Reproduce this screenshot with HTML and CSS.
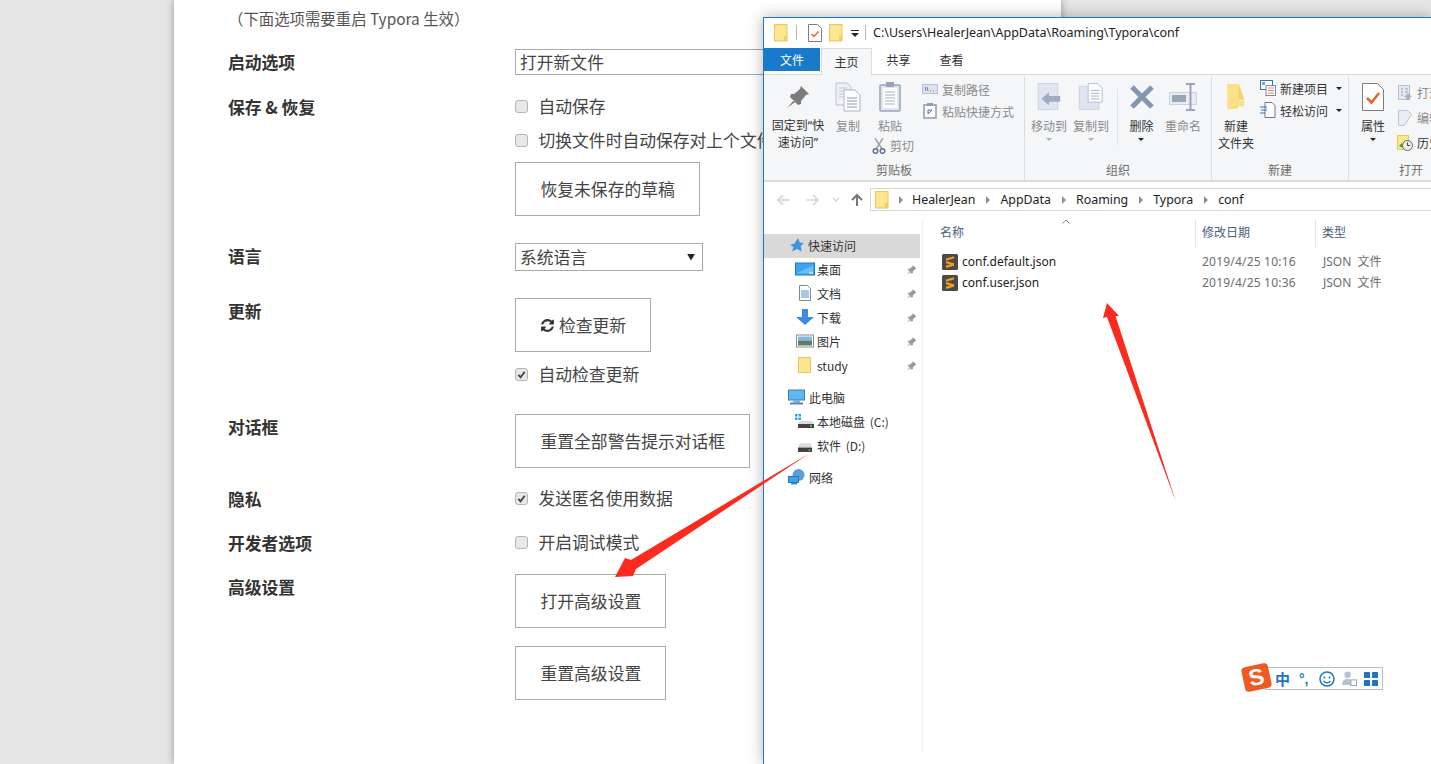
FILE: index.html
```html
<!DOCTYPE html>
<html lang="zh">
<head>
<meta charset="utf-8">
<title>Typora 偏好设置</title>
<link rel="stylesheet" href="styles.css">
</head>
<body>
<svg class="defs" width="0" height="0" aria-hidden="true">
  <symbol id="folder" viewBox="0 0 14 18"><rect x=".5" y=".5" width="12.5" height="16.5" fill="#fde692" stroke="#e9c75c"/><rect x="10" y="12" width="3" height="5" fill="#f3cc62"/></symbol>
  <symbol id="doccheck" viewBox="0 0 14 18"><path d="M.5.5h9l4 4v13H.5z" fill="#fff" stroke="#7d7d7d"/><path d="M3.500 10l2.500 2.500 4.500-5" fill="none" stroke="#e8622a" stroke-width="1.500"/></symbol>
  <symbol id="pin" viewBox="0 0 24 24"><path d="M15 1l8 8-3 1-5 6v3l-3 1-8-8 1-3h3l6-5zM8 15l-7 8 8-6z"/></symbol>
  <symbol id="sublime" viewBox="0 0 16 16"><rect width="16" height="16" rx="1.500" fill="#4a4a4a"/><path d="M4 6.800V4.500l8-2.300v2.300zM4 7l8 2.300v2.300L4 9.300zM4 11.600l8-2.300v2.400l-8 2.300z" fill="#f89a1c"/></symbol>
  <symbol id="drive" viewBox="0 0 16 11"><path d="M2 0h12l2 5H0z" fill="#dcdcdc"/><rect y="5" width="16" height="5" fill="#3e3e3e"/><rect x="12" y="7" width="2" height="1.500" fill="#5ddb5d"/></symbol>
  <symbol id="miniarrow" viewBox="0 0 6 8"><path d="M1 0l4 4-4 4z" fill="#8f8f8f"/></symbol>
</svg>

<main class="panel">
  <div class="row-clipped"><div class="label">编辑器 [?]</div></div>
  <p class="note">（下面选项需要重启 Typora 生效）</p>

  <section class="row gap-18">
    <div class="label">启动选项</div>
    <div class="controls"><div class="select select-wide">打开新文件</div></div>
  </section>

  <section class="row gap-19">
    <div class="label">保存 &amp; 恢复</div>
    <div class="controls">
      <label class="check"><span class="box"></span>自动保存</label>
      <label class="check"><span class="box"></span>切换文件时自动保存对上个文件的修改</label>
      <button class="btn">恢复未保存的草稿</button>
    </div>
  </section>

  <section class="row gap-27">
    <div class="label">语言</div>
    <div class="controls"><div class="select select-lang">系统语言<span class="caret">▼</span></div></div>
  </section>

  <section class="row gap-27">
    <div class="label">更新</div>
    <div class="controls">
      <button class="btn btn-update">
        <svg class="refresh" viewBox="0 0 1792 1792"><path d="M1639 1056q0 5-1 7-64 268-268 434.500t-478 166.500q-146 0-282.500-55t-243.500-157l-129 129q-19 19-45 19t-45-19-19-45v-448q0-26 19-45t45-19h448q26 0 45 19t19 45-19 45l-137 137q71 66 161 102t187 36q134 0 250-65t186-179q11-17 53-117 8-23 30-23h192q13 0 22.500 9.500t9.500 22.500zm25-800v448q0 26-19 45t-45 19h-448q-26 0-45-19t-19-45 19-45l138-138q-148-137-349-137-134 0-250 65t-186 179q-11 17-53 117-8 23-30 23h-199q-13 0-22.500-9.500t-9.500-22.500v-7q65-268 270-434.500t480-166.500q146 0 284 55.500t245 156.500l130-129q19-19 45-19t45 19 19 45z"/></svg>检查更新
      </button>
      <label class="check"><span class="box on"><svg viewBox="0 0 12 12"><path d="M2.500 6.500l2.500 2.500 4.500-6" fill="none" stroke="#444" stroke-width="2"/></svg></span>自动检查更新</label>
    </div>
  </section>

  <section class="row gap-28">
    <div class="label">对话框</div>
    <div class="controls"><button class="btn">重置全部警告提示对话框</button></div>
  </section>

  <section class="row gap-18">
    <div class="label">隐私</div>
    <div class="controls"><label class="check"><span class="box on"><svg viewBox="0 0 12 12"><path d="M2.500 6.500l2.500 2.500 4.500-6" fill="none" stroke="#444" stroke-width="2"/></svg></span>发送匿名使用数据</label></div>
  </section>

  <section class="row gap-20">
    <div class="label">开发者选项</div>
    <div class="controls"><label class="check"><span class="box"></span>开启调试模式</label></div>
  </section>

  <section class="row gap-20">
    <div class="label">高级设置</div>
    <div class="controls controls-loose">
      <button class="btn">打开高级设置</button>
      <button class="btn">重置高级设置</button>
    </div>
  </section>
</main>

<div class="window">
  <header class="titlebar">
    <svg class="qat-icon"><use href="#folder"/></svg>
    <span class="qat-sep"></span>
    <svg class="qat-icon"><use href="#doccheck"/></svg>
    <svg class="qat-icon"><use href="#folder"/></svg>
    <svg class="qat-drop" viewBox="0 0 8 8"><path d="M0 1h8v1H0zM0 4h8L4 8z" fill="#222"/></svg>
    <span class="qat-sep qat-sep-end"></span>
    <span class="title">C:\Users\HealerJean\AppData\Roaming\Typora\conf</span>
  </header>

  <nav class="tabs">
    <div class="tab tab-file">文件</div>
    <div class="tab tab-active">主页</div>
    <div class="tab">共享</div>
    <div class="tab">查看</div>
  </nav>

  <div class="ribbon">
    <section class="group g-clip">
      <div class="group-body">
        <div class="big w56 on">
          <span class="slot"><svg class="i24 pin-grey"><use href="#pin"/></svg></span>
          <span class="latin-first">固定到“快<br>速访问”</span>
        </div>
        <div class="big w44">
          <span class="slot"><svg class="i26" viewBox="0 0 26 30"><path d="M1 1h11l4 4v18H1z" fill="#eef1f6" stroke="#b9c3d2"/><path d="M4 6h8M4 9h4M4 12h4M4 15h4" stroke="#c0c9d6"/><path d="M9 8h11l5 5v16H9z" fill="#fff" stroke="#a9b4c6"/><path d="M12 16h10M12 19h10M12 22h10M12 25h10" stroke="#8c99ad"/></svg></span>
          <span>复制</span>
        </div>
        <div class="big w40">
          <span class="slot"><svg class="i26" viewBox="0 0 22 30"><rect x="1" y="3" width="20" height="26" rx="1" fill="#dfe5ee" stroke="#98a4b8" stroke-width="1.500"/><rect x="4" y="6" width="14" height="20" fill="#fff"/><rect x="7" y="0" width="8" height="5" fill="#98a4b8"/><path d="M6 10h10M6 13h10M6 16h10M6 19h10M6 22h10" stroke="#a5b1c3"/></svg></span>
          <span>粘贴</span>
          <span class="cut"><svg class="i14" viewBox="0 0 14 16"><path d="M3 0l7 11M11 0L4 11" stroke="#9aa4b4" stroke-width="1.500"/><circle cx="3.500" cy="13" r="2.300" fill="none" stroke="#5f7391" stroke-width="1.500"/><circle cx="10.500" cy="13" r="2.300" fill="none" stroke="#5f7391" stroke-width="1.500"/></svg>剪切</span>
        </div>
        <div class="small-col sc-clip">
          <div class="small"><svg class="i16" viewBox="0 0 16 10"><rect x=".5" y=".5" width="15" height="9" fill="#dce3ee" stroke="#b7c1d1"/><path d="M3 3l1 4M5 3l1 4M8 7h1M11 7h1" stroke="#6f819c"/></svg>复制路径</div>
          <div class="small"><svg class="i16" viewBox="0 0 14 16"><rect x="1" y="2" width="12" height="13" fill="#fff" stroke="#8d9bb2" stroke-width="1.500"/><rect x="4" y="0" width="6" height="3" fill="#8d9bb2"/><path d="M5 11V7h4M5 11l4-4" fill="none" stroke="#56709a"/></svg>粘贴快捷方式</div>
        </div>
      </div>
      <div class="group-label label-clip">剪贴板</div>
    </section>

    <section class="group g-org">
      <div class="group-body">
        <div class="big w48">
          <span class="slot"><svg class="i30" viewBox="0 0 24 30"><rect x=".5" y=".5" width="21" height="28" fill="#dfe6f1" stroke="#c9d2e0"/><path d="M4 17l8-7v4h12v6H12v4z" fill="#9fadc2"/></svg></span>
          <span class="drop">移动到</span>
        </div>
        <div class="big w36">
          <span class="slot"><svg class="i30" viewBox="0 0 26 30"><rect x=".5" y="3.500" width="21" height="25" fill="#dfe6f1" stroke="#c9d2e0"/><path d="M10 .5h10l5 5v15H10z" fill="#fff" stroke="#b3bccb"/><path d="M13 8h9M13 11h9M13 14h9M13 17h9" stroke="#a5afc0"/></svg></span>
          <span class="drop">复制到</span>
        </div>
        <span class="group-sep"></span>
        <div class="big w47 on">
          <span class="slot"><svg class="i26" viewBox="0 0 26 26"><path d="M3 3l20 20M23 3L3 23" stroke="#8496b0" stroke-width="5"/></svg></span>
          <span class="drop drop-dark">删除</span>
        </div>
        <div class="big w36">
          <span class="slot"><svg class="i30" viewBox="0 0 28 28"><rect x=".5" y="9.500" width="27" height="12" fill="#e9edf3" stroke="#c9d2e0"/><rect x="3" y="12" width="14" height="7" fill="#98a4b8"/><path d="M17 1h9M17 27h9M21.500 1v26" stroke="#98a4b8" stroke-width="2"/></svg></span>
          <span>重命名</span>
        </div>
      </div>
      <div class="group-label">组织</div>
    </section>

    <section class="group g-new">
      <div class="group-body">
        <div class="big w48 on">
          <span class="slot"><svg class="i30" viewBox="0 0 20 30"><path d="M1 1h12l6 17H13l-1 9-11 1z" fill="#f6d25f"/><path d="M1 1h12v18h6v6H9l-8 3z" fill="#fbe089"/></svg></span>
          <span>新建<br>文件夹</span>
        </div>
        <div class="small-col on">
          <div class="small"><svg class="i16" viewBox="0 0 16 16"><rect x=".5" y=".5" width="12" height="9" fill="#fff" stroke="#2f74b5"/><rect x="2" y="2" width="3" height="3" fill="#7ba7d4"/><rect x="6" y="5.500" width="9.500" height="10" fill="#fff" stroke="#7d8a9e"/><path d="M8 8h6M8 10.500h6M8 13h6" stroke="#e28060"/></svg>新建项目<i class="tri"></i></div>
          <div class="small"><svg class="i16" viewBox="0 0 16 16"><path d="M5 .5h7l3 3v12H5z" fill="#fff" stroke="#6e7786"/><path d="M0 5h7M1 8h6M0 11h5" stroke="#2a75bb" stroke-width="1.200"/></svg>轻松访问<i class="tri"></i></div>
        </div>
      </div>
      <div class="group-label">新建</div>
    </section>

    <section class="group g-open">
      <div class="group-body">
        <div class="big w48 on">
          <span class="slot"><svg class="i30" viewBox="0 0 22 28"><path d="M.5.500h15l6 6v21H.5z" fill="#fff" stroke="#7d7d7d"/><path d="M5 15l4.500 4.500L17 10" fill="none" stroke="#e8622a" stroke-width="2.500"/></svg></span>
          <span class="drop drop-dark">属性</span>
        </div>
        <div class="small-col small-tall">
          <div class="small"><svg class="i16" viewBox="0 0 14 16"><rect x=".5" y=".5" width="11" height="14" fill="#e4e9f1" stroke="#b7c1d1"/><path d="M3 4h2M3 7h2M3 10h2M7 4h3M7 7h3" stroke="#8d9bb2"/><path d="M8 15v-3H6l4-4 4 4h-2v3z" fill="#a8b4c6"/></svg>打开</div>
          <div class="small"><svg class="i16" viewBox="0 0 14 16"><path d="M.5.500h9l4 4-7 11h-6z" fill="#e9eef5" stroke="#bcc6d6"/></svg>编辑</div>
          <div class="small on"><svg class="i16" viewBox="0 0 16 16"><rect x=".5" y=".5" width="11" height="14" fill="#fde692" stroke="#e9c75c"/><circle cx="10.500" cy="10.500" r="5" fill="#eee" stroke="#666"/><path d="M10.500 7.500v3h2.500" fill="none" stroke="#444"/><path d="M2 11l3-3 1 5z" fill="#3a9a3a"/></svg>历史记录</div>
        </div>
      </div>
      <div class="group-label">打开</div>
    </section>
  </div>

  <div class="addressbar">
    <svg class="nav-arrow" viewBox="0 0 14 12"><path d="M13 6H2M7 1L2 6l5 5" fill="none" stroke="#dcdcdc" stroke-width="2"/></svg>
    <svg class="nav-arrow" viewBox="0 0 14 12"><path d="M1 6h11M7 1l5 5-5 5" fill="none" stroke="#dcdcdc" stroke-width="2"/></svg>
    <svg class="nav-down" viewBox="0 0 8 5"><path d="M1 1l3 3 3-3" fill="none" stroke="#d0d0d0" stroke-width="1.200"/></svg>
    <svg class="nav-up" viewBox="0 0 12 13"><path d="M6 13V2M1 7l5-5 5 5" fill="none" stroke="#777" stroke-width="2"/></svg>
    <div class="crumbs">
      <svg class="crumb-folder"><use href="#folder"/></svg>
      <svg class="sep-arrow sep-first"><use href="#miniarrow"/></svg><span>HealerJean</span>
      <svg class="sep-arrow"><use href="#miniarrow"/></svg><span>AppData</span>
      <svg class="sep-arrow"><use href="#miniarrow"/></svg><span>Roaming</span>
      <svg class="sep-arrow"><use href="#miniarrow"/></svg><span>Typora</span>
      <svg class="sep-arrow"><use href="#miniarrow"/></svg><span>conf</span>
    </div>
  </div>

  <div class="content">
    <aside class="tree">
      <div class="node node-l1 node-active"><svg class="ni" viewBox="0 0 14 14"><path d="M8 0l1.800 4.500L14 5l-3.300 3 1 5.500L7 11l-5 2.500L3.500 9 0 7l4.500-1.500z" fill="#3b96e0"/></svg>快速访问</div>
      <div class="node node-l2"><svg class="ni2" viewBox="0 0 20 13"><rect x=".5" y=".5" width="19" height="12" fill="#38a4ee" stroke="#1b78c9"/><path d="M1 11l17-8v8z" fill="#6cc0f5"/><rect x="14" y="10" width="4" height="1" fill="#fff"/></svg>桌面<svg class="npin"><use href="#pin"/></svg></div>
      <div class="node node-l2"><svg class="ni2 ni2-tall" viewBox="0 0 20 16"><path d="M4.500.5h8l3 3v12h-11z" fill="#fff" stroke="#8a8a8a"/><path d="M6 6h8M6 8h8M6 10h8M6 12h8" stroke="#4a8fd0"/></svg>文档<svg class="npin"><use href="#pin"/></svg></div>
      <div class="node node-l2"><svg class="ni2 ni2-tall" viewBox="0 0 20 16"><path d="M7 0h6v8h6l-9 8-9-8h6z" fill="#3b8be0"/></svg>下载<svg class="npin"><use href="#pin"/></svg></div>
      <div class="node node-l2"><svg class="ni2" viewBox="0 0 20 13"><rect x="1.500" y=".5" width="17" height="12" fill="#fff" stroke="#8a8a8a"/><rect x="3" y="2" width="14" height="4" fill="#8cb5de"/><rect x="3" y="6" width="14" height="5" fill="#5a7d6e"/></svg>图片<svg class="npin"><use href="#pin"/></svg></div>
      <div class="node node-l2"><svg class="ni2 ni2-tall" viewBox="0 0 20 16"><rect x="3.500" y=".5" width="12" height="15" fill="#fde692" stroke="#e9c75c"/></svg>study<svg class="npin"><use href="#pin"/></svg></div>
      <div class="node node-l1 node-gap"><svg class="ni ni-wide" viewBox="0 0 17 15"><rect x=".5" y=".5" width="16" height="10" fill="#5fb8ef" stroke="#3a7fb8"/><rect x="5" y="11" width="7" height="2" fill="#7fa8c8"/><rect x="2" y="13" width="13" height="2" fill="#4a8bbe"/></svg>此电脑</div>
      <div class="node node-l2"><svg class="ni2" viewBox="0 0 20 14"><rect x="0" y="0" width="2.500" height="2.500" fill="#2aa6e8"/><rect x="3.500" y="0" width="2.500" height="2.500" fill="#2aa6e8"/><rect x="0" y="3.500" width="2.500" height="2.500" fill="#2aa6e8"/><rect x="3.500" y="3.500" width="2.500" height="2.500" fill="#2aa6e8"/><path d="M5 7h12l2 3H3z" fill="#dcdcdc"/><rect x="3" y="10" width="16" height="4" fill="#444"/><rect x="15" y="11" width="2" height="1.500" fill="#5ddb5d"/></svg>本地磁盘 (C:)</div>
      <div class="node node-l2"><svg class="ni2 ni2-drive"><use href="#drive"/></svg>软件 (D:)</div>
      <div class="node node-l1 node-gap"><svg class="ni ni-wide" viewBox="0 0 17 16"><circle cx="10.500" cy="6" r="6" fill="#5b9ed8"/><rect x=".5" y="7.500" width="10" height="6" fill="#3ba3e8" stroke="#2777b4"/><rect x="3" y="14" width="6" height="1.500" fill="#4a8bbe"/></svg>网络</div>
    </aside>

    <div class="files">
      <div class="sort-up"><svg viewBox="0 0 8 5"><path d="M.5 4.500L4 1l3.500 3.500" fill="none" stroke="#888"/></svg></div>
      <div class="file-head file-grid">
        <div>名称</div>
        <div class="col-sep">修改日期</div>
        <div class="col-sep">类型</div>
      </div>
      <div class="file file-grid">
        <div class="file-name"><svg class="i16"><use href="#sublime"/></svg>conf.default.json</div>
        <div class="col-pad">2019/4/25 10:16</div>
        <div class="col-pad col-type">JSON 文件</div>
      </div>
      <div class="file file-grid">
        <div class="file-name"><svg class="i16"><use href="#sublime"/></svg>conf.user.json</div>
        <div class="col-pad">2019/4/25 10:36</div>
        <div class="col-pad col-type">JSON 文件</div>
      </div>
    </div>
  </div>
</div>

<div class="ime">
  <span class="ime-logo"><span>S</span></span>
  <span class="ime-zh">中</span>
  <span class="ime-punc">°,</span>
  <svg class="ime-smile" viewBox="0 0 16 16"><circle cx="8" cy="8" r="7" fill="none" stroke="#1f74c4" stroke-width="1.500"/><circle cx="5.500" cy="6.500" r="1" fill="#1f74c4"/><circle cx="10.500" cy="6.500" r="1" fill="#1f74c4"/><path d="M4.500 10c2 2.500 5 2.500 7 0" fill="none" stroke="#1f74c4" stroke-width="1.300"/></svg>
  <svg class="ime-user" viewBox="0 0 16 16"><circle cx="6" cy="4" r="3.500" fill="#b4c3d4"/><path d="M0 15c0-5 3-6.500 6-6.500S11 9 11 15z" fill="#b4c3d4"/><rect x="9.500" y="9.500" width="6" height="6" fill="#fff" stroke="#8ba0b8"/></svg>
  <svg class="ime-grid" viewBox="0 0 14 14"><rect width="6" height="6" rx=".6" fill="#1f74c4"/><rect x="8" width="6" height="6" rx=".6" fill="#1f74c4"/><rect y="8" width="6" height="6" rx=".6" fill="#1f74c4"/><rect x="8" y="8" width="6" height="6" rx=".6" fill="#1f74c4"/></svg>
</div>

<svg class="annotations" viewBox="0 0 1431 764">
  <polygon points="810,453 636,569 633,576 615,577 625,558 631,560"/>
  <polygon points="1176,502 1115.500,316 1119,316 1107,303 1103,318 1107,317"/>
</svg>
</body>
</html>
```

FILE: styles.css
```css
* { box-sizing: border-box; }
html, body { margin: 0; height: 764px; overflow: hidden; }
body {
  background: #e6e6e6;
  color: #333;
  font-family: "Noto Sans CJK SC", "Noto Sans", sans-serif;
}
.defs { position: absolute; }

/* settings panel */
.panel {
  width: 887px;
  height: 764px;
  margin-left: 174px;
  padding: 7px 54px 0;
  background: #fff;
  box-shadow: 0 0 8px rgba(0, 0, 0, .35);
  font-size: 16.8px;
  line-height: 24px;
  overflow: hidden;
}
.note { margin: -1px 0 0; color: #555; font-size: 15.4px; height: 25px; }
.row {
  display: grid;
  grid-template-columns: 287px 1fr;
}
.gap-18 { margin-top: 18px; }
.gap-19 { margin-top: 19px; }
.gap-20 { margin-top: 20px; }
.gap-27 { margin-top: 27px; }
.gap-28 { margin-top: 28px; }
.row-clipped { margin: -31px 0 0; height: 31px; }
.label { margin: 1px 0 -1px; height: 24px; font-weight: 700; color: #333; white-space: nowrap; }
.row-clipped .label { margin: 0; }
.controls { display: flex; flex-direction: column; align-items: flex-start; gap: 10px; }
.controls-loose { gap: 18px; }
.check { display: flex; align-items: center; height: 24px; color: #444; white-space: nowrap; }
.box {
  flex: none;
  width: 13px;
  height: 13px;
  margin-right: 10.500px;
  background: #e8e8e8;
  border: 1px solid #b5b5b5;
  border-radius: 3px;
  display: flex;
}
.box svg { width: 11px; height: 11px; }
.btn {
  display: flex;
  align-items: center;
  height: 54px;
  padding: 0 24px 0 24.500px;
  background: #fff;
  border: 1px solid #aaa;
  color: #444;
  font: inherit;
  white-space: nowrap;
}
.btn-update { padding-left: 24px; padding-right: 24px; }
.refresh { width: 15px; height: 15px; margin-right: 4px; fill: #333; }
.select {
  position: relative;
  height: 26px;
  padding: 0 4px;
  border: 1px solid #a9a9a9;
  background: #fff;
  line-height: 24px;
  color: #444;
}
.select-wide { width: 500px; }
.select-lang { width: 188px; height: 28px; line-height: 27px; }
.caret { position: absolute; right: 7px; top: -1px; font-size: 8px; color: #222; }

/* explorer window */
.window {
  position: absolute;
  left: 763px;
  top: 17px;
  right: 0;
  bottom: 0;
  background: #fff;
  border-top: 1px solid #1979ca;
  border-left: 1px solid #1979ca;
  box-shadow: 0 0 14px rgba(0, 0, 0, .3);
  color: #222;
  font-size: 12px;
  line-height: 17px;
  overflow: hidden;
}
.titlebar { display: flex; align-items: center; height: 29px; padding-left: 10px; }
.qat-icon { width: 14px; height: 18px; margin-right: 7.500px; }
.qat-sep { width: 1px; height: 15px; margin: 0 11px 0 0; background: #b5b5b5; }
.qat-drop { width: 8px; height: 8px; margin-right: 6.500px; }
.qat-sep-end { margin-right: 7px; }
.title { font-family: "Noto Sans", sans-serif; font-size: 12.500px; color: #222; white-space: nowrap; }

.tabs { display: flex; height: 27px; }
.tab { width: 53px; text-align: center; line-height: 26px; color: #333; }
.tab-file {
  width: 56px;
  height: 23px;
  line-height: 23px;
  margin: 1px 1px 0 0;
  background: #1979ca;
  color: #fff;
}
.tab-active {
  width: 51px;
  height: 27px;
  margin-top: 1px;
  line-height: 25px;
  background: #f5f6f7;
  border: 1px solid #dadbdc;
  border-bottom: 0;
  position: relative;
  z-index: 1;
}
.ribbon {
  display: flex;
  height: 108px;
  background: #f5f6f7;
  border-top: 1px solid #dadbdc;
  border-bottom: 2px solid #dadbdc;
  color: #8a8a8a;
  white-space: nowrap;
}
.group {
  flex: none;
  display: flex;
  flex-direction: column;
  border-right: 1px solid #dadbdc;
  margin-top: 2px;
  height: 103px;
}
.g-clip { width: 261px; padding-left: 6px; }
.g-org { width: 187px; }
.g-new { width: 137px; }
.g-open { width: 124px; border-right: 0; }
.group-body { display: flex; flex: 1; min-height: 0; }
.group-label { height: 20px; line-height: 19px; text-align: center; color: #6d6d6d; }
.label-clip { padding-right: 6px; }
.big { flex: none; display: flex; flex-direction: column; align-items: center; text-align: center; }
.latin-first { font-family: "Noto Sans", "Noto Sans CJK SC", sans-serif; }
.on { color: #333; }
.w56 { width: 56px; }
.w48 { width: 48px; }
.w47 { width: 47px; }
.w44 { width: 44px; }
.w40 { width: 40px; }
.w36 { width: 36px; }
.slot { flex: none; height: 40px; display: flex; align-items: center; justify-content: center; }
.i24 { width: 24px; height: 24px; }
.i26 { width: 26px; height: 30px; }
.i30 { width: 30px; height: 28px; }
.i14 { width: 14px; height: 16px; }
.i16 { width: 16px; height: 16px; flex: none; }
.pin-grey { fill: #7b7b7b; }
.cut { display: flex; align-items: center; gap: 4px; margin: 3px 0 0 6px; }
.drop { position: relative; padding-bottom: 10px; }
.drop::after {
  content: "";
  position: absolute;
  left: 50%;
  bottom: 3px;
  margin-left: -3px;
  border: 3px solid transparent;
  border-top: 3px solid #b0b0b0;
  border-bottom: 0;
}
.drop-dark { color: #333; }
.drop-dark::after { border-top-color: #222; }
.group-sep { flex: none; width: 1px; height: 56px; margin: 12px 0 0 8px; background: #e2e3e4; }
.small-col { display: flex; flex-direction: column; }
.sc-clip { margin-left: 12px; padding-top: 1px; }
.small { display: flex; align-items: center; gap: 4px; height: 22px; white-space: nowrap; }
.small-tall .small { height: 25px; }
.small-tall { padding-top: 3px; }
.tri {
  margin-left: 4px;
  border: 3px solid transparent;
  border-top: 3px solid #222;
  border-bottom: 0;
}

.addressbar { display: flex; align-items: center; height: 30px; padding-top: 5px; }
.nav-arrow { width: 14px; height: 12px; margin-left: 12px; margin-right: 4px; }
.nav-down { width: 8px; height: 5px; margin-left: 8px; margin-right: 11px; }
.nav-up { width: 12px; height: 13px; margin-right: 7px; }
.crumbs {
  flex: 1;
  display: flex;
  align-items: center;
  height: 23px;
  padding-left: 4px;
  border: 1px solid #d9d9d9;
  border-right: 0;
  font-family: "Noto Sans", sans-serif;
  font-size: 12.400px;
  color: #222;
  white-space: nowrap;
}
.crumb-folder { width: 14px; height: 18px; margin-right: 9px; }
.sep-arrow { width: 6px; height: 8px; margin: 0 9px 0 10px; }
.sep-first { margin: 0 8px 0 0; }

.content { display: flex; height: 540px; padding-top: 7px; }
.tree { flex: none; width: 159px; border-right: 1px solid #f0f0f0; padding-top: 15px; }
.node { position: relative; display: flex; align-items: center; height: 24px; width: 156px; padding-bottom: 2px; color: #333; white-space: nowrap; word-spacing: 2px; }
.node-l1 { padding-left: 24px; }
.node-l2 { padding-left: 31px; }
.node-active { background: #d9d9d9; padding-left: 26px; }
.node-gap { margin-top: 8px; }
.ni { width: 14px; height: 14px; margin-right: 4px; flex: none; }
.ni-wide { width: 17px; height: 16px; margin-right: 4px; }
.ni2 { width: 20px; height: 14px; margin-right: 2px; flex: none; }
.ni2-tall { height: 16px; }
.ni2-drive { width: 14px; height: 10px; margin: 5px 5px 0 3px; }
.npin { position: absolute; left: 142px; top: 6px; width: 11px; height: 12px; fill: #9c9c9c; }

.files { position: relative; flex: 1; font-family: "Noto Sans", "Noto Sans CJK SC", sans-serif; }
.sort-up { position: absolute; left: 139px; top: 0; width: 8px; line-height: 0; }
.sort-up svg { width: 8px; height: 5px; }
.file-grid { display: grid; }
.file-head {
  height: 27px;
  align-items: stretch;
  padding-left: 17px;
  grid-template-columns: 255px 120px 120px;
  line-height: 27px;
  color: #4c607a;
}
.col-sep { border-left: 1px solid #e3e3e3; padding-left: 6px; }
.file { height: 21px; line-height: 21px; color: #6d6d6d; padding-left: 19px; grid-template-columns: 253px 120px 120px; }
.file-head + .file { margin-top: 5px; }
.file-name { display: flex; align-items: center; gap: 4px; color: #222; white-space: nowrap; }
.col-pad { padding-left: 7px; white-space: nowrap; letter-spacing: .2px; }
.col-type { padding-left: 8px; letter-spacing: 0; word-spacing: 3px; }

/* input method bar */
.ime {
  position: absolute;
  left: 1265px;
  top: 667px;
  display: flex;
  align-items: center;
  width: 118px;
  height: 23px;
  background: #fff;
  border: 1px solid #b4bfce;
  color: #1f74c4;
}
.ime-logo {
  position: absolute;
  left: -23px;
  top: -3px;
  width: 27px;
  height: 25px;
  border-radius: 4px;
  background: #ee5a22;
  transform: rotate(-12deg);
  color: #fff;
  font: 900 23px/25px "Liberation Sans", sans-serif;
  text-align: center;
}
.ime-zh { margin-left: 9px; font-size: 15px; font-weight: 700; line-height: 21px; }
.ime-punc { margin-left: 9px; width: 14px; font: 700 14px/14px "Liberation Sans", sans-serif; }
.ime-smile { width: 16px; height: 16px; margin-left: 6px; }
.ime-user { width: 15px; height: 15px; margin-left: 7px; }
.ime-grid { width: 14px; height: 14px; margin-left: 7px; }

.annotations { position: absolute; left: 0; top: 0; width: 1431px; height: 764px; pointer-events: none; }
.annotations polygon { fill: #fb2b1f; }
```
